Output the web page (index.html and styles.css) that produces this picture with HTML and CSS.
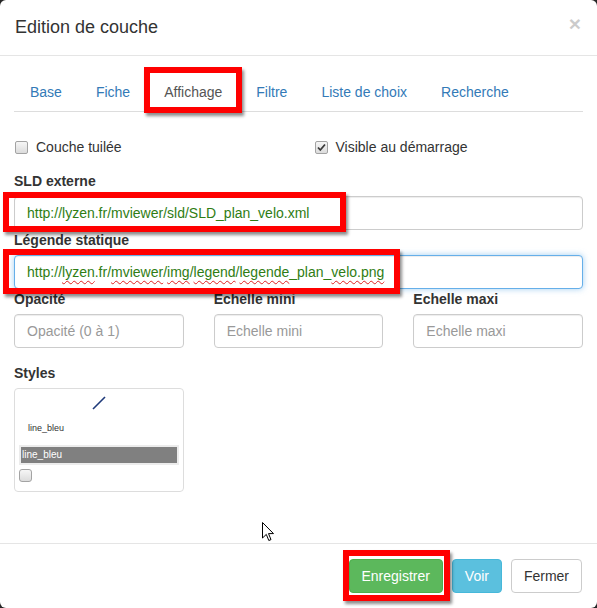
FILE: index.html
```html
<!DOCTYPE html>
<html lang="fr">
<head>
<meta charset="utf-8">
<title>Edition de couche</title>
<link rel="stylesheet" href="styles.css">
</head>
<body>
<div class="modal">
  <div class="modal-header">
    <h4 class="modal-title">Edition de couche</h4>
    <button class="close" type="button">×</button>
  </div>
  <div class="modal-body">
    <ul class="nav-tabs">
      <li><a href="#">Base</a></li>
      <li><a href="#">Fiche</a></li>
      <li class="active"><a href="#">Affichage</a></li>
      <li><a href="#">Filtre</a></li>
      <li><a href="#">Liste de choix</a></li>
      <li><a href="#">Recherche</a></li>
    </ul>

    <div class="check-row">
      <label class="check"><span class="cb"></span>Couche tuilée</label>
      <label class="check"><span class="cb"><svg class="tick" viewBox="0 0 11 11" width="11" height="11"><path d="M2 5.5 L4.3 8 L9 2.5" fill="none" stroke="#3a3a3a" stroke-width="1.8"/></svg></span>Visible au démarrage</label>
    </div>

    <label class="field-label">SLD externe</label>
    <div class="form-control url">http://lyzen.fr/mviewer/sld/SLD_plan_velo.xml</div>

    <label class="field-label">Légende statique</label>
    <div class="form-control url focus">http://<span class="sp">lyzen</span>.fr/<span class="sp">mviewer</span>/<span class="sp">img</span>/<span class="sp">legend</span>/<span class="sp">legende</span>_plan_<span class="sp">velo.png</span></div>

    <div class="three-cols">
      <div class="col">
        <label class="field-label">Opacité</label>
        <input class="form-control" type="text" placeholder="Opacité (0 à 1)">
      </div>
      <div class="col">
        <label class="field-label">Echelle mini</label>
        <input class="form-control" type="text" placeholder="Echelle mini">
      </div>
      <div class="col">
        <label class="field-label">Echelle maxi</label>
        <input class="form-control" type="text" placeholder="Echelle maxi">
      </div>
    </div>

    <label class="field-label styles-label">Styles</label>
    <div class="three-cols">
      <div class="styles-box">
        <svg class="style-icon" viewBox="0 0 14 14" width="14" height="14"><line x1="1" y1="13" x2="13" y2="1" stroke="#1f3a7a" stroke-width="1.6"/></svg>
        <div class="style-name">line_bleu</div>
        <div class="style-select"><span>line_bleu</span></div>
        <span class="cb small"></span>
      </div>
    </div>
  </div>
  <div class="modal-footer">
    <button class="btn btn-success" type="button">Enregistrer</button>
    <button class="btn btn-info" type="button">Voir</button>
    <button class="btn btn-default" type="button">Fermer</button>
  </div>

  <div class="mark mark-tab"></div>
  <div class="mark mark-sld"></div>
  <div class="mark mark-legend"></div>
  <div class="mark mark-save"></div>

  <svg class="cursor" viewBox="0 0 13 20" width="13" height="20"><path d="M0.5 0.5 L0.5 16 L4.3 12.4 L6.8 18.5 L9 17.6 L6.5 11.6 L11.5 11.6 Z" fill="#fff" stroke="#000" stroke-width="1" stroke-linejoin="miter"/></svg>
</div>
</body>
</html>
```

FILE: styles.css
```css
html, body {
  margin: 0;
  height: 100%;
}

body {
  background: #262626;
  font-family: "Liberation Sans", Arial, sans-serif;
  font-size: 14px;
  color: #333;
}

.modal {
  position: relative;
  width: 597px;
  height: 608px;
  background: #fff;
  border-radius: 6px;
  overflow: hidden;
  display: flex;
  flex-direction: column;
}

.modal-header {
  padding: 15px;
  border-bottom: 1px solid #e5e5e5;
  display: flex;
  justify-content: space-between;
  align-items: flex-start;
}

.modal-title {
  margin: 0;
  font-size: 18px;
  font-weight: normal;
  line-height: 25px;
  color: #333;
}

.close {
  font-family: "Liberation Sans", Arial, sans-serif;
  font-size: 21px;
  font-weight: bold;
  line-height: 1;
  color: #000;
  opacity: 0.2;
  background: none;
  border: 0;
  padding: 0;
  margin-top: -2px;
  margin-right: 1px;
}

.modal-body {
  flex: 1;
  padding: 15px 14px 0;
}

.nav-tabs {
  display: flex;
  list-style: none;
  margin: 0;
  padding: 0;
  border-bottom: 1px solid #ddd;
}

.nav-tabs a {
  display: block;
  padding: 10px 15px 9px;
  line-height: 20px;
  margin-right: 2px;
  color: #337ab7;
  text-decoration: none;
  border: 1px solid transparent;
  border-bottom: 0;
}

.nav-tabs .active a {
  color: #555;
}

.check-row {
  display: grid;
  grid-template-columns: 1fr 1fr;
  column-gap: 30px;
  margin-top: 25px;
  margin-bottom: 14px;
}

.check {
  display: flex;
  align-items: center;
  gap: 8px;
  line-height: 20px;
  padding-left: 1px;
}

.cb {
  display: inline-flex;
  align-items: center;
  justify-content: center;
  width: 13px;
  height: 13px;
  box-sizing: border-box;
  border: 1px solid #a3a3a3;
  border-radius: 2px;
  background: linear-gradient(#f6f6f6, #dcdcdc);
}

.tick {
  display: block;
}

.field-label {
  display: block;
  font-weight: bold;
  line-height: 20px;
  margin-bottom: 5px;
}

.form-control {
  display: block;
  width: 100%;
  height: 34px;
  box-sizing: border-box;
  padding: 6px 12px;
  font-family: "Liberation Sans", Arial, sans-serif;
  font-size: 14px;
  line-height: 20px;
  color: #555;
  background: #fff;
  border: 1px solid #ccc;
  border-radius: 4px;
  box-shadow: inset 0 1px 1px rgba(0, 0, 0, 0.075);
  white-space: nowrap;
  overflow: hidden;
}

.form-control::placeholder {
  color: #999;
}

.url {
  color: #2f7d14;
}

.focus {
  border-color: #66afe9;
  box-shadow: inset 0 1px 1px rgba(0, 0, 0, 0.075), 0 0 6px rgba(102, 175, 233, 0.6);
}

.sp {
  text-decoration-line: underline;
  text-decoration-style: wavy;
  text-decoration-color: #e02020;
  text-decoration-thickness: 1px;
  text-underline-offset: 3px;
}

.three-cols {
  display: grid;
  grid-template-columns: repeat(3, 1fr);
  column-gap: 30px;
}

.styles-label {
  margin-top: 15px;
}

.styles-box {
  height: 104px;
  box-sizing: border-box;
  border: 1px solid #ddd;
  border-radius: 4px;
  padding: 7px 4px 0;
  display: flex;
  flex-direction: column;
}

.style-icon {
  display: block;
  align-self: center;
}

.style-name {
  font-size: 9px;
  line-height: 11px;
  color: #333;
  margin-top: 13px;
  padding-left: 9px;
}

.style-select {
  margin-top: 11px;
  height: 20px;
  box-sizing: border-box;
  border: 2px solid #ececec;
  background: #808080;
  color: #fff;
  font-size: 10px;
  line-height: 16px;
  padding-left: 1px;
}

.cb.small {
  width: 13px;
  height: 13px;
  margin-top: 4px;
  border-radius: 3px;
}

.modal-footer {
  padding: 15px;
  border-top: 1px solid #e5e5e5;
  text-align: right;
}

.btn {
  display: inline-block;
  padding: 6px 12px;
  margin-left: 5px;
  font-family: "Liberation Sans", Arial, sans-serif;
  font-size: 14px;
  line-height: 20px;
  border: 1px solid transparent;
  border-radius: 4px;
  vertical-align: middle;
}

.btn-success {
  color: #fff;
  background: #5cb85c;
  border-color: #4cae4c;
}

.btn-info {
  color: #fff;
  background: #5bc0de;
  border-color: #46b8da;
}

.btn-default {
  color: #333;
  background: #fff;
  border-color: #ccc;
}

.mark {
  position: absolute;
  box-sizing: border-box;
  border: 6px solid #ff0000;
  box-shadow: 2px 3px 3px rgba(0, 0, 0, 0.45);
}

.mark-tab {
  left: 144px;
  top: 67px;
  width: 98px;
  height: 46px;
}

.mark-sld {
  left: 3px;
  top: 192px;
  width: 343px;
  height: 40px;
}

.mark-legend {
  left: 3px;
  top: 249px;
  width: 397px;
  height: 45px;
}

.mark-save {
  left: 343px;
  top: 550px;
  width: 107px;
  height: 51px;
}

.cursor {
  position: absolute;
  left: 262px;
  top: 522px;
}
```
